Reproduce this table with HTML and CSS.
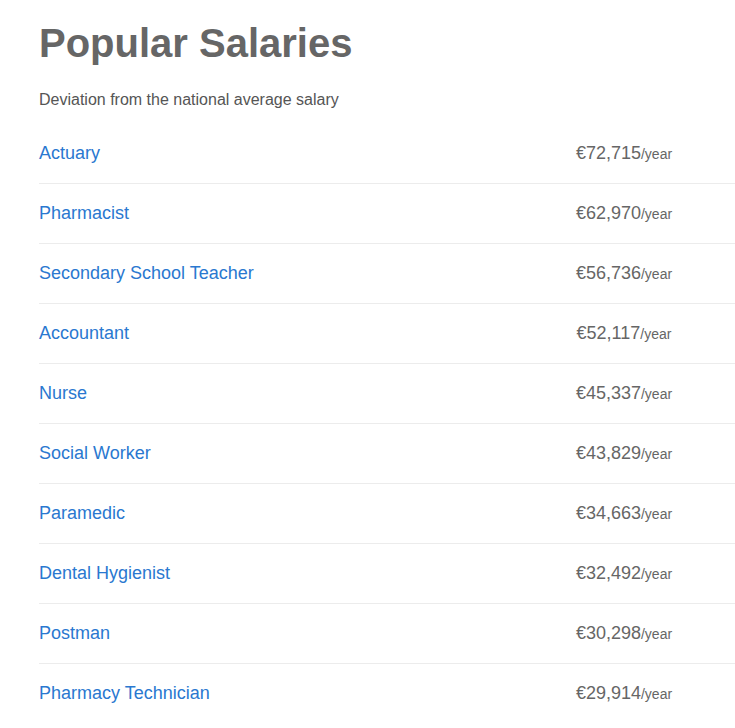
FILE: index.html
```html
<!DOCTYPE html>
<html>
<head>
<meta charset="utf-8">
<link rel="stylesheet" href="styles.css">
</head>
<body>
<section class="salaries">
  <h1 class="title">Popular Salaries</h1>
  <p class="subtitle">Deviation from the national average salary</p>
  <ul class="list">
    <li class="row"><a class="job" href="#">Actuary</a><span class="pay">€72,715<small class="per">/year</small></span></li>
    <li class="row"><a class="job" href="#">Pharmacist</a><span class="pay">€62,970<small class="per">/year</small></span></li>
    <li class="row"><a class="job" href="#">Secondary School Teacher</a><span class="pay">€56,736<small class="per">/year</small></span></li>
    <li class="row"><a class="job" href="#">Accountant</a><span class="pay">€52,117<small class="per">/year</small></span></li>
    <li class="row"><a class="job" href="#">Nurse</a><span class="pay">€45,337<small class="per">/year</small></span></li>
    <li class="row"><a class="job" href="#">Social Worker</a><span class="pay">€43,829<small class="per">/year</small></span></li>
    <li class="row"><a class="job" href="#">Paramedic</a><span class="pay">€34,663<small class="per">/year</small></span></li>
    <li class="row"><a class="job" href="#">Dental Hygienist</a><span class="pay">€32,492<small class="per">/year</small></span></li>
    <li class="row"><a class="job" href="#">Postman</a><span class="pay">€30,298<small class="per">/year</small></span></li>
    <li class="row"><a class="job" href="#">Pharmacy Technician</a><span class="pay">€29,914<small class="per">/year</small></span></li>
  </ul>
</section>
</body>
</html>
```
FILE: styles.css
```css
html, body {
  margin: 0;
  padding: 0;
  background: #fff;
  overflow-x: hidden;
}
body {
  font-family: "Liberation Sans", Arial, sans-serif;
  color: #666;
}
.salaries {
  padding: 20px 0 0 39px;
}
.title {
  margin: 0;
  font-size: 40px;
  line-height: 46px;
  font-weight: bold;
  color: #666;
}
.subtitle {
  margin: 22px 0 0;
  font-size: 16px;
  line-height: 24px;
  color: #555;
}
.list {
  list-style: none;
  margin: 12px 0 0;
  padding: 0;
}
.row {
  display: grid;
  grid-template-columns: 1fr 222px;
  align-items: center;
  height: 59px;
  border-bottom: 1px solid #ececec;
}
.row:last-child {
  border-bottom: none;
}
.job {
  font-size: 18px;
  color: #2a78d0;
  text-decoration: none;
}
.pay {
  text-align: center;
  font-size: 18px;
  color: #666;
}
.per {
  font-size: 14px;
  color: #666;
}
```
